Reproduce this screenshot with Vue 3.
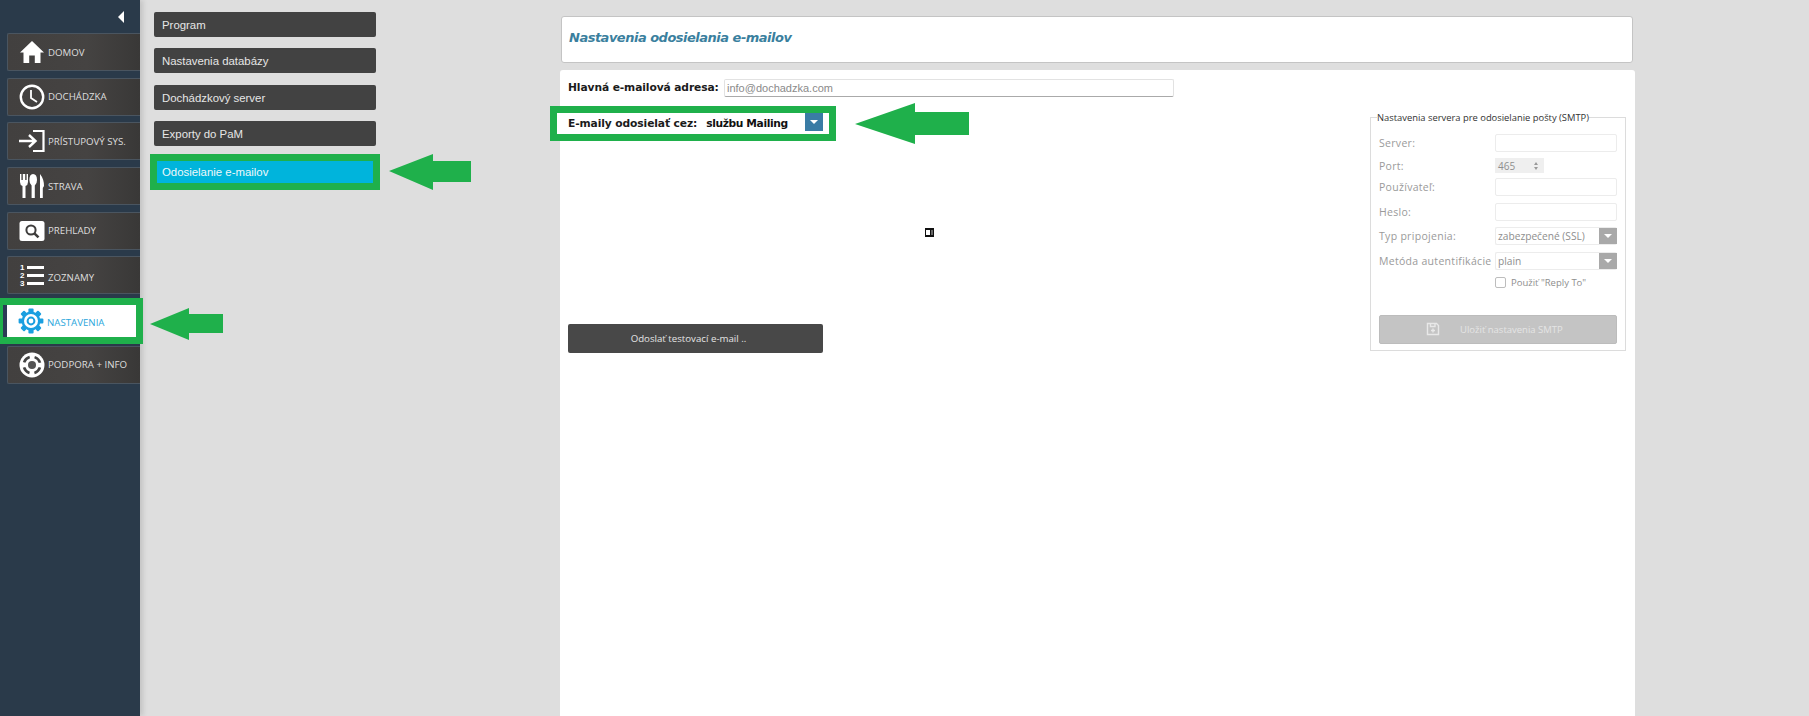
<script setup>
const navItems = [
  { label: 'DOMOV', icon: 'home' },
  { label: 'DOCHÁDZKA', icon: 'clock' },
  { label: 'PRÍSTUPOVÝ SYS.', icon: 'enter' },
  { label: 'STRAVA', icon: 'food' },
  { label: 'PREHĽADY', icon: 'search' },
  { label: 'ZOZNAMY', icon: 'list' },
  { label: 'NASTAVENIA', icon: 'gear', active: true },
  { label: 'PODPORA + INFO', icon: 'help' },
]
const subItems = ['Program', 'Nastavenia databázy', 'Dochádzkový server', 'Exporty do PaM']
const gearTeeth = [0, 45, 90, 135, 180, 225, 270, 315]
</script>

<template>
  <div class="page">
    <aside class="sidebar">
      <div class="collapse"><span class="tri"></span></div>
      <nav class="nav">
        <a v-for="item in navItems" :key="item.label" class="nav-item" :class="{ active: item.active }">
          <span class="nav-icon">
            <svg v-if="item.icon === 'home'" width="26" height="24" viewBox="0 0 26 24">
              <path d="M13 1 L25 12.5 L21.5 12.5 L21.5 23 L15.8 23 L15.8 15.5 L10.2 15.5 L10.2 23 L4.5 23 L4.5 12.5 L1 12.5 Z" fill="#fff" />
            </svg>
            <svg v-else-if="item.icon === 'clock'" width="26" height="26" viewBox="0 0 26 26">
              <circle cx="13" cy="13" r="11.2" fill="none" stroke="#fff" stroke-width="2.4" />
              <path d="M12 6 V14 L18 18" fill="none" stroke="#fff" stroke-width="1.8" />
            </svg>
            <svg v-else-if="item.icon === 'enter'" width="26" height="24" viewBox="0 0 26 24">
              <path d="M14 2 H24.5 V22 H14" fill="none" stroke="#fff" stroke-width="2.2" />
              <path d="M0 12 H15 M10 6 L16.5 12 L10 18" fill="none" stroke="#fff" stroke-width="2.4" />
            </svg>
            <svg v-else-if="item.icon === 'food'" width="26" height="26" viewBox="0 0 26 26">
              <path d="M1 1 V9 Q1 12 3.5 13 V25 H6.5 V13 Q9 12 9 9 V1 H7.6 V7 H6.2 V1 H3.8 V7 H2.4 V1 Z" fill="#fff" />
              <path d="M14 1 Q18 1 18 7 Q18 11 15.8 12.5 V25 H12.6 V12.5 Q10.4 11 10.4 7 Q10.4 1 14 1 Z" fill="#fff" />
              <path d="M21 1 Q25 6 25 13 L23.8 15 V25 H21 Z" fill="#fff" />
            </svg>
            <svg v-else-if="item.icon === 'search'" width="26" height="20" viewBox="0 0 26 20">
              <rect x="0.5" y="0" width="25" height="20" rx="2.5" fill="#fff" />
              <circle cx="12" cy="9" r="4.6" fill="none" stroke="#3e3d3c" stroke-width="2" />
              <path d="M15.4 12.4 L19.5 16.4" stroke="#3e3d3c" stroke-width="2.6" />
            </svg>
            <span v-else-if="item.icon === 'list'" class="list-icon">
              <span class="list-row"><i>1</i><b></b></span>
              <span class="list-row"><i>2</i><b></b></span>
              <span class="list-row"><i>3</i><b></b></span>
            </span>
            <svg v-else-if="item.icon === 'gear'" width="26" height="26" viewBox="0 0 26 26">
              <g fill="#1a9fe0">
                <rect v-for="a in gearTeeth" :key="a" x="10.4" y="0.6" width="5.2" height="5" rx="1" :transform="`rotate(${a} 13 13)`" />
              </g>
              <circle cx="13" cy="13" r="8.2" fill="#fff" stroke="#1a9fe0" stroke-width="2.4" />
              <circle cx="13" cy="13" r="3.4" fill="none" stroke="#1a9fe0" stroke-width="2" />
            </svg>
            <svg v-else width="26" height="26" viewBox="0 0 26 26">
              <circle cx="13" cy="13" r="12.5" fill="#fff" />
              <circle cx="13" cy="13" r="4" fill="#555" />
              <circle cx="13" cy="13" r="8.3" fill="none" stroke="#444" stroke-width="2.6" stroke-dasharray="8 5" stroke-dashoffset="10.5" />
            </svg>
          </span>
          <span class="nav-label">{{ item.label }}</span>
        </a>
      </nav>
    </aside>

    <section class="submenu">
      <a v-for="s in subItems" :key="s" class="sub-item">{{ s }}</a>
      <a class="sub-item current">Odosielanie e-mailov</a>
    </section>

    <main class="content">
      <header class="title-card">
        <h1>Nastavenia odosielania e-mailov</h1>
      </header>
      <div class="form-card">
        <div class="form-left">
          <div class="mail-row">
            <label class="strong mail-label">Hlavná e-mailová adresa:</label>
            <div class="mail-input">info@dochadzka.com</div>
          </div>
          <div class="via-row">
            <label class="strong">E-maily odosielať cez:</label>
            <span class="strong via-value">službu Mailing</span>
            <span class="drop blue"><span class="caret"></span></span>
          </div>
          <div class="test-btn">Odoslať testovací e-mail ..</div>
        </div>

        <span class="stray"><i></i><b></b></span>

        <fieldset class="smtp">
          <legend>Nastavenia servera pre odosielanie pošty (SMTP)</legend>
          <div class="smtp-row"><label>Server:</label><div class="field"></div></div>
          <div class="smtp-row short"><label>Port:</label>
            <div class="port"><span>465</span><span class="spin"><i class="up"></i><i class="down"></i></span></div>
          </div>
          <div class="smtp-row"><label>Používateľ:</label><div class="field"></div></div>
          <div class="smtp-row"><label>Heslo:</label><div class="field"></div></div>
          <div class="smtp-row"><label>Typ pripojenia:</label>
            <div class="field select"><span>zabezpečené (SSL)</span><span class="drop grey"><span class="caret"></span></span></div>
          </div>
          <div class="smtp-row"><label>Metóda autentifikácie</label>
            <div class="field select"><span>plain</span><span class="drop grey"><span class="caret"></span></span></div>
          </div>
          <div class="smtp-check"><span class="box"></span><span>Použiť "Reply To"</span></div>
          <div class="save-btn">
            <svg width="14" height="14" viewBox="0 0 14 14">
              <path d="M1.5 1.5 H10.5 L12.5 3.5 V12.5 H1.5 Z M4.5 1.5 V4.5 H9 V1.5 M7 6.5 V10.5 M5 8.5 H9" fill="none" stroke="#e8e8e8" stroke-width="1.4" />
            </svg>
            <span>Uložiť nastavenia SMTP</span>
          </div>
        </fieldset>
      </div>
    </main>

    <svg class="arrow a-nav" width="74" height="33" viewBox="0 0 74 33"><path d="M0 16 L39 0 L39 6 L73 6 L73 25 L39 25 L39 32 Z" /></svg>
    <svg class="arrow a-sub" width="83" height="38" viewBox="0 0 83 38"><path d="M0 18 L44 1 L44 8 L82 8 L82 29 L44 29 L44 37 Z" /></svg>
    <svg class="arrow a-via" width="115" height="42" viewBox="0 0 115 42"><path d="M0 21 L60 0 L60 9 L114 9 L114 32 L60 32 L60 41 Z" /></svg>
  </div>
</template>

<style>
html, body { margin: 0; background: #dedede; }
</style>

<style scoped>
.page {
  position: relative;
  display: flex;
  height: 716px;
  overflow: hidden;
  background: #dedede;
  font-family: "Liberation Sans", Arial, sans-serif;
}
.sidebar {
  flex: 0 0 140px;
  background: #2a3a4a;
  box-shadow: 3px 0 5px rgba(0, 0, 0, 0.12);
  box-sizing: border-box;
  position: relative;
  z-index: 1;
}
.collapse { height: 33px; display: flex; justify-content: flex-end; align-items: center; padding: 0 16px 0 0; box-sizing: border-box; }
.tri { width: 0; height: 0; border-style: solid; border-width: 6px 6px 6px 0; border-color: transparent #fff transparent transparent; }
.nav { display: flex; flex-direction: column; gap: 6.7px; padding-left: 7px; }
.nav-item {
  box-sizing: border-box;
  height: 38px;
  display: flex;
  align-items: center;
  background: linear-gradient(90deg, #42403f 0%, #454342 60%, #393837 100%);
  border: 1px solid #4a5560;
  border-right: 0;
  border-radius: 2px 0 0 2px;
  color: #dedede;
  font: 9.7px "Open Sans", "Noto Sans", sans-serif;
}
.nav-item:nth-child(6) .nav-label { margin-top: 4px; }
.nav-icon { flex: 0 0 26px; margin-left: 11px; margin-right: 3px; display: flex; justify-content: center; align-items: center; }
.nav-icon svg { display: block; }
.nav-label { white-space: nowrap; }
.nav-item.active {
  height: 32px;
  margin: 4px 4px 2px -4px;
  background: #fff;
  border: 0;
  border-left: 4px solid #2b3a55;
  border-radius: 0;
  color: #2aa6dc;
  box-shadow: 0 0 0 7px #1fb04b;
  position: relative;
  z-index: 2;
}
.nav-item.active .nav-label { margin-top: 2px; }
.list-icon { display: flex; flex-direction: column; gap: 3px; width: 24px; }
.list-row { display: flex; align-items: center; gap: 2px; height: 5px; }
.list-row i { font: 700 8px/5px "Liberation Sans", sans-serif; color: #fff; width: 5px; }
.list-row b { flex: 1; height: 2.5px; background: #fff; }

.submenu {
  flex: 0 0 420px;
  box-sizing: border-box;
  padding: 12px 0 0 14px;
  display: flex;
  flex-direction: column;
  gap: 11.4px;
  align-items: flex-start;
}
.sub-item {
  box-sizing: border-box;
  width: 222px;
  height: 25px;
  padding: 1px 0 0 8px;
  display: flex;
  align-items: center;
  background: #424242;
  border-radius: 2px;
  color: #e6e6e6;
  font-size: 11.4px;
}
.sub-item.current {
  width: 216px;
  height: 22px;
  margin: 3px 0 0 3px;
  padding: 0 0 0 5px;
  background: #00b4dc;
  border-radius: 0;
  color: #f0f8fa;
  box-shadow: 0 0 0 7px #1fb04b;
}

.content { flex: 0 0 1075px; display: flex; flex-direction: column; padding-top: 16px; box-sizing: border-box; }
.title-card {
  box-sizing: border-box;
  height: 47px;
  margin: 0 2px 7px 1px;
  padding-left: 7px;
  display: flex;
  align-items: center;
  background: #fff;
  border: 1px solid #c4c4c4;
  border-radius: 3px;
}
.title-card h1 {
  margin: 0 0 4px;
  color: #3a7f9e;
  font: italic 700 13px "DejaVu Sans", Verdana, sans-serif;
  letter-spacing: -0.5px;
}
.form-card {
  position: relative;
  flex: 1;
  display: flex;
  justify-content: space-between;
  background: #fff;
  border-radius: 3px 3px 0 0;
}
.form-left { width: 640px; display: flex; flex-direction: column; }
.strong { font: 700 10.7px "DejaVu Sans", Verdana, sans-serif; color: #1b1b1b; letter-spacing: -0.1px; white-space: nowrap; }
.mail-row { display: flex; align-items: center; padding: 9px 0 0 8px; height: 17px; }
.mail-label { flex: 0 0 156px; }
.mail-input {
  box-sizing: border-box;
  flex: 0 0 450px;
  height: 18px;
  line-height: 17px;
  padding-left: 2px;
  border: 1px solid #e2e2e2;
  border-bottom-color: #aaa;
  border-radius: 2px;
  color: #8a8a8a;
  font-size: 11px;
}
.via-row {
  box-sizing: border-box;
  position: relative;
  z-index: 2;
  display: flex;
  align-items: center;
  width: 272px;
  height: 21px;
  margin: 17px 0 0 -3px;
  padding-left: 11px;
  background: #fff;
  box-shadow: 0 0 0 7px #1fb04b;
}
.via-value { margin-left: 9px; width: 99px; color: #111; letter-spacing: -0.4px; }
.drop { display: flex; align-items: center; justify-content: center; flex: 0 0 18px; height: 18px; align-self: flex-start; }
.drop.blue { background: #3a7ca5; }
.drop.grey { background: #a9a9a9; }
.caret { width: 0; height: 0; border-style: solid; border-width: 4px 4px 0 4px; border-color: #fff transparent transparent transparent; }
.test-btn {
  box-sizing: border-box;
  width: 255px;
  height: 29px;
  margin: 190px 0 0 8px;
  padding-right: 14px;
  display: flex;
  align-items: center;
  justify-content: center;
  background: #484848;
  border-radius: 2px;
  color: #e4e4e4;
  font: 9.7px "Open Sans", "Noto Sans", sans-serif;
}
.stray {
  position: absolute;
  left: 365px;
  top: 158px;
  box-sizing: border-box;
  width: 9px;
  height: 9px;
  display: flex;
  gap: 1px;
  background: #111;
  padding: 2px 1px;
}
.stray i { flex: 1; background: #fff; }
.stray b { width: 2px; background: #666; }

.smtp {
  box-sizing: border-box;
  width: 256px;
  height: 240px;
  margin: 41px 9px 0 0;
  padding: 10px 8px 0 8px;
  border: 1px solid #dcdcdc;
  font: 10.5px "Open Sans", "Noto Sans", sans-serif;
  color: #9a9a9a;
  min-inline-size: 0;
}
.smtp legend {
  padding: 0;
  margin-left: -2px;
  font: 9.4px "Open Sans", "Noto Sans", sans-serif;
  color: #333;
  white-space: nowrap;
}
.smtp-row { display: flex; align-items: center; height: 18px; margin-bottom: 6.4px; }
.smtp-row label { flex: 0 0 116px; letter-spacing: 0.3px; white-space: nowrap; font-size: 10.5px; }
.smtp-row.short { height: 15px; margin: 3px 0 5px; }
.field { box-sizing: border-box; width: 122px; height: 18px; border: 1px solid #ececec; border-radius: 2px; }
.field.select { display: flex; align-items: center; justify-content: space-between; padding-left: 2px; font-size: 10.2px; color: #8e8e8e; border-right: 0; }
.field.select .drop { align-self: center; height: 16px; }
.port {
  box-sizing: border-box;
  width: 49px;
  height: 15px;
  display: flex;
  align-items: center;
  justify-content: space-between;
  padding: 0 6px 0 3px;
  background: #efefef;
  font-size: 10px;
  color: #8e8e8e;
}
.spin { display: flex; flex-direction: column; gap: 2px; }
.spin i { display: block; width: 0; height: 0; border-style: solid; }
.spin .up { border-width: 0 2.5px 3px; border-color: transparent transparent #999; }
.spin .down { border-width: 3px 2.5px 0; border-color: #999 transparent transparent; }
.smtp-check { display: flex; align-items: center; gap: 5px; height: 14px; margin: 2px 0 0 116px; font-size: 9.5px; color: #8e8e8e; white-space: nowrap; }
.box { box-sizing: border-box; width: 11px; height: 11px; border: 1px solid #bdbdbd; border-radius: 2px; }
.save-btn {
  box-sizing: border-box;
  height: 29px;
  margin-top: 25px;
  display: flex;
  align-items: center;
  gap: 20px;
  padding-left: 46px;
  background: #c4c4c4;
  border: 1px solid #bcbcbc;
  border-radius: 2px;
  color: #e4e4e4;
  font-size: 9.5px;
}
.arrow { position: absolute; z-index: 3; fill: #1fb04b; }
.a-nav { left: 150px; top: 308px; }
.a-sub { left: 389px; top: 153px; }
.a-via { left: 855px; top: 103px; }
</style>
